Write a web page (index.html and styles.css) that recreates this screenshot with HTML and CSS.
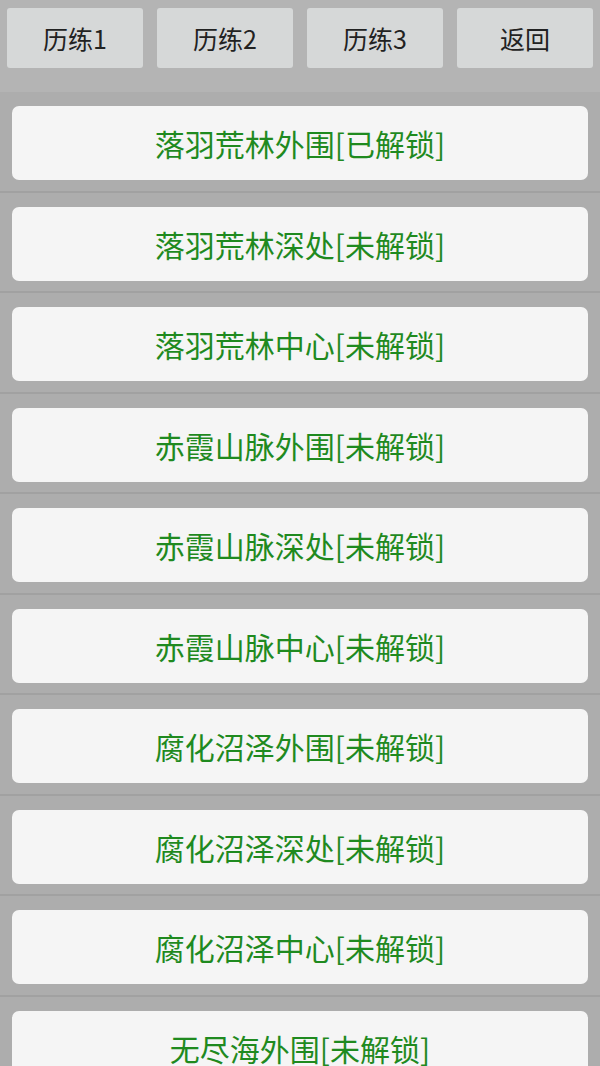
FILE: index.html
```html
<!DOCTYPE html>
<html lang="zh-CN">
<head>
<meta charset="utf-8">
<title>历练</title>
<link rel="stylesheet" href="styles.css">
</head>
<body>
<div class="topbar">
  <div class="tab">历练1</div>
  <div class="tab">历练2</div>
  <div class="tab">历练3</div>
  <div class="tab">返回</div>
</div>
<div class="list">
  <div class="row"><div class="card">落羽荒林外围[已解锁]</div></div>
  <div class="row"><div class="card">落羽荒林深处[未解锁]</div></div>
  <div class="row"><div class="card">落羽荒林中心[未解锁]</div></div>
  <div class="row"><div class="card">赤霞山脉外围[未解锁]</div></div>
  <div class="row"><div class="card">赤霞山脉深处[未解锁]</div></div>
  <div class="row"><div class="card">赤霞山脉中心[未解锁]</div></div>
  <div class="row"><div class="card">腐化沼泽外围[未解锁]</div></div>
  <div class="row"><div class="card">腐化沼泽深处[未解锁]</div></div>
  <div class="row"><div class="card">腐化沼泽中心[未解锁]</div></div>
  <div class="row"><div class="card">无尽海外围[未解锁]</div></div>
</div>
</body>
</html>
```
FILE: styles.css
```css
html, body {
  margin: 0;
  padding: 0;
}
body {
  width: 600px;
  height: 1066px;
  overflow: hidden;
  background: #adadad;
  font-family: "Noto Sans CJK SC", "Noto Sans", sans-serif;
}
.topbar {
  height: 92px;
  box-sizing: border-box;
  padding: 8px 7px 0;
  background: #b4b4b4;
  display: flex;
  gap: 14px;
}
.tab {
  flex: 1;
  height: 60px;
  background: #d6d8d8;
  border-radius: 3px;
  display: flex;
  align-items: center;
  justify-content: center;
  font-size: 25px;
  color: #222;
}
.list {
  background: #adadad;
}
.row {
  padding: 14px 12px 10.5px;
  border-bottom: 2px solid #a1a1a1;
}
.card {
  height: 74px;
  background: #f5f5f5;
  border-radius: 7px;
  display: flex;
  align-items: center;
  justify-content: center;
  font-size: 30px;
  color: #1f8a1f;
}
```
